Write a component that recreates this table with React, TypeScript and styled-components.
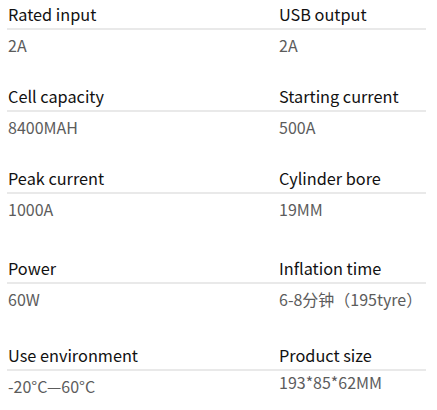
import React from "react";
import styled, { createGlobalStyle } from "styled-components";

const Global = createGlobalStyle`
  html, body { margin: 0; padding: 0; background: #fff; }
  body { font-family: "Noto Sans CJK SC", "Noto Sans", sans-serif; }
`;

const Page = styled.div`
  width: 419px;
  padding: 4px 0 0 7px;
  display: flex;
  flex-direction: column;
`;

const Row = styled.div<{ $gap: number }>`
  display: grid;
  grid-template-columns: 211px 208px;
  margin-top: ${(p) => p.$gap}px;
`;

const Cell = styled.div<{ $indent: number }>`
  display: flex;
  flex-direction: column;
  > * { padding-left: ${(p) => p.$indent}px; }
`;

const Label = styled.div`
  font-size: 16.3px;
  line-height: 20px;
  color: #111;
  height: 20px;
  white-space: nowrap;
`;

const Divider = styled.div`
  height: 2px;
  background: #e9e9e9;
  margin-top: 4px;
  padding: 0 !important;
`;

const Value = styled.div<{ $shift: number }>`
  font-size: 16px;
  line-height: 20px;
  color: #5c5c5c;
  margin-top: ${(p) => 5 + p.$shift}px;
  white-space: nowrap;
`;

type Item = { label: string; value: string; shift?: number };
type RowData = { gap: number; items: [Item, Item] };

const rows: RowData[] = [
  { gap: 0, items: [{ label: "Rated input", value: "2A" }, { label: "USB output", value: "2A" }] },
  { gap: 31, items: [{ label: "Cell capacity", value: "8400MAH" }, { label: "Starting current", value: "500A" }] },
  { gap: 31, items: [{ label: "Peak current", value: "1000A" }, { label: "Cylinder bore", value: "19MM" }] },
  { gap: 39, items: [{ label: "Power", value: "60W" }, { label: "Inflation time", value: "6-8分钟（195tyre）" }] },
  { gap: 36, items: [{ label: "Use environment", value: "-20°C—60°C" }, { label: "Product size", value: "193*85*62MM", shift: -4 }] },
];

export default function App() {
  return (
    <>
      <Global />
      <Page>
        {rows.map((r, i) => (
          <Row key={i} $gap={r.gap}>
            {r.items.map((it, j) => (
              <Cell key={j} $indent={j === 0 ? 1 : 61}>
                <Label>{it.label}</Label>
                <Divider />
                <Value $shift={it.shift ?? 0}>{it.value}</Value>
              </Cell>
            ))}
          </Row>
        ))}
      </Page>
    </>
  );
}
